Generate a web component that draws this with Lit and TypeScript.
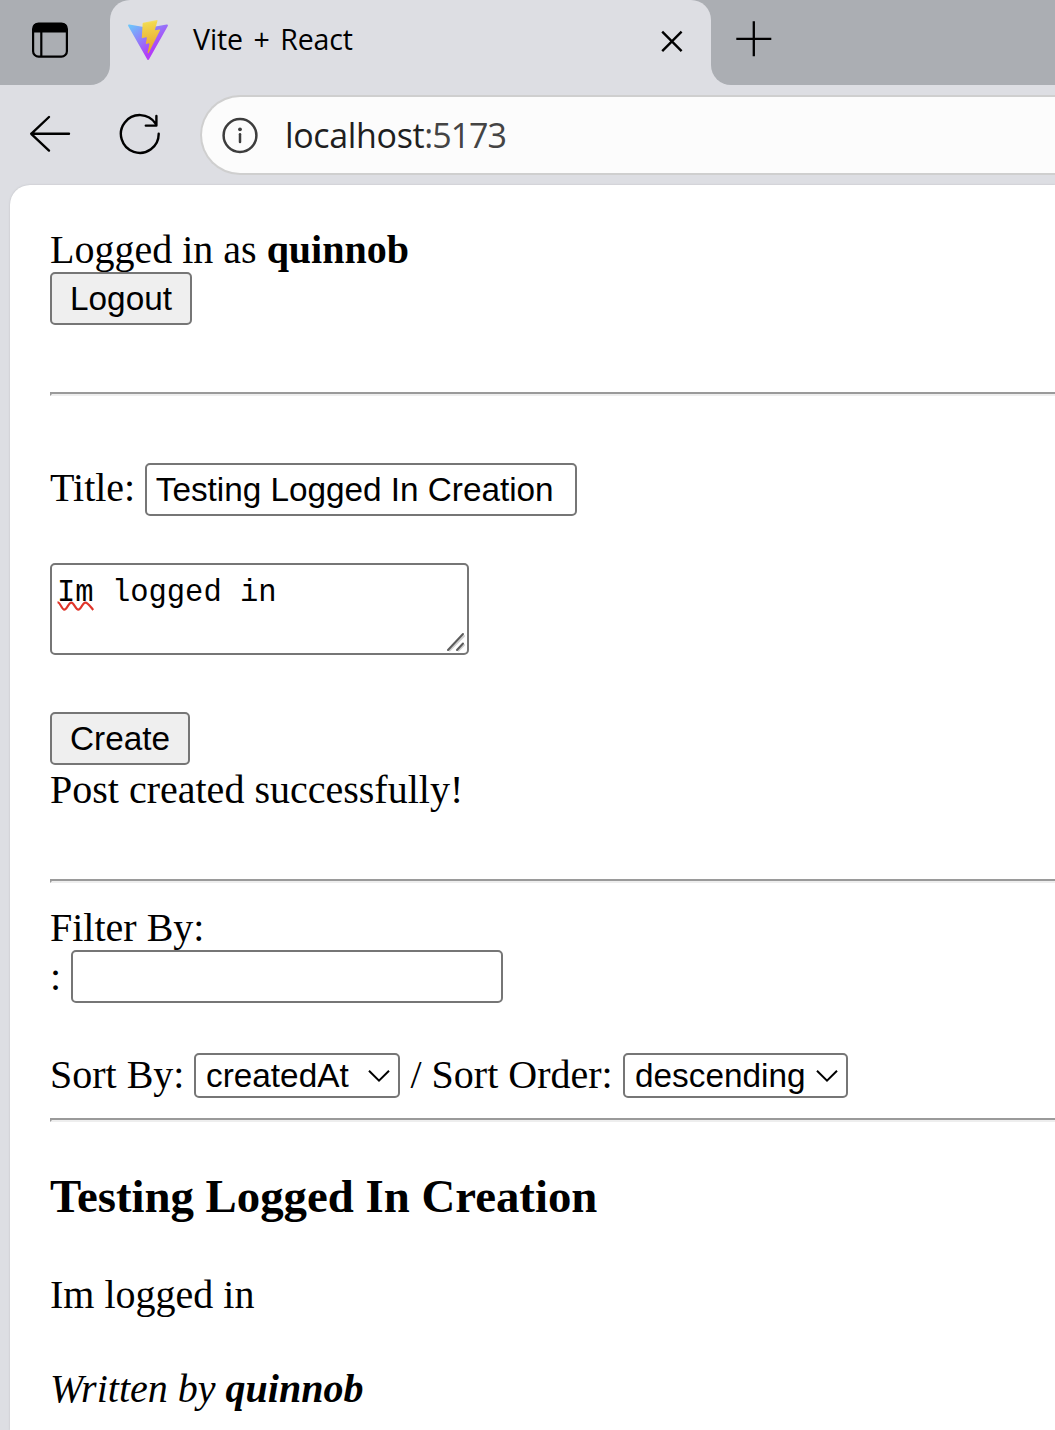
import { LitElement, html, css } from "lit";
import { customElement, property } from "lit/decorators.js";

@customElement("browser-tabs")
class BrowserTabs extends LitElement {
  static styles = css`
    :host { display: flex; height: 85px; background: #abaeb3; }
    .side { width: 110px; height: 85px; box-sizing: border-box; padding: 22px 0 0 32px; border-bottom-right-radius: 20px; background: #abaeb3; }
    .under { background: #dddee3; display: flex; }
    .tab { display: flex; width: 600.5px; height: 85px; box-sizing: border-box; padding: 0 0 0 18px; background: #dddee3; border-radius: 20px 20px 0 0; }
    .wrap { background: #abaeb3; }
    .rest { flex: 1; box-sizing: border-box; padding: 21px 0 0 25.5px; background: #abaeb3; border-bottom-left-radius: 20px; }
    .rest-under { flex: 1; display: flex; background: #dddee3; }
    .logo { margin-top: 20px; flex: none; }
    .name { margin-left: 25px; width: 466.5px; font: 400 28.5px/79px "Open Sans", sans-serif; letter-spacing: -0.1px; word-spacing: 3.2px; color: #000; white-space: nowrap; }
    .close { margin-top: 30px; flex: none; }
    svg { display: block; }
  `;
  render() {
    return html`
      <div class="under"><div class="side">
        <svg width="36" height="36" viewBox="0 0 36 36" fill="none">
          <rect x="1.1" y="1.5" width="33.8" height="33.2" rx="5.5" stroke="#000" stroke-width="2.2" />
          <path d="M1 10.5V6.5Q1 1 6.5 1h23Q35 1 35 6.5v4z" fill="#000" />
          <path d="M9.3 10v24" stroke="#000" stroke-width="2.2" />
        </svg>
      </div></div>
      <div class="wrap"><div class="tab">
        <svg class="logo" width="40" height="40" viewBox="0 0 256 257">
          <defs>
            <linearGradient id="a" x1="-.828%" x2="57.636%" y1="7.652%" y2="78.411%">
              <stop offset="0%" stop-color="#6cc4fb" /><stop offset="100%" stop-color="#b23cf8" />
            </linearGradient>
            <linearGradient id="b" x1="43.376%" x2="50.316%" y1="2.242%" y2="89.03%">
              <stop offset="0%" stop-color="#f5e273" /><stop offset="8.333%" stop-color="#f2d84e" /><stop offset="100%" stop-color="#e8a52e" />
            </linearGradient>
          </defs>
          <path fill="url(#a)" d="M255.153 37.938L134.897 252.976c-2.483 4.44-8.862 4.466-11.382.048L.875 37.958c-2.746-4.814 1.371-10.646 6.827-9.67l120.385 21.517a6.537 6.537 0 0 0 2.322-.004l117.867-21.483c5.438-.991 9.574 4.796 6.877 9.62Z" />
          <path fill="url(#b)" d="M185.432.063L96.44 17.501a3.268 3.268 0 0 0-2.634 3.014l-5.474 92.456a3.268 3.268 0 0 0 3.997 3.378l24.777-5.718c2.318-.535 4.413 1.507 3.936 3.838l-7.361 36.047c-.495 2.426 1.782 4.5 4.151 3.78l15.304-4.649c2.372-.72 4.652 1.36 4.15 3.788l-11.698 56.621c-.732 3.542 3.979 5.473 5.943 2.437l1.313-2.028l72.516-144.72c1.215-2.423-.88-5.186-3.54-4.672l-25.505 4.922c-2.396.462-4.435-1.77-3.759-4.114l16.646-57.705c.677-2.35-1.37-4.583-3.769-4.113Z" />
        </svg>
        <div class="name">Vite + React</div>
        <svg class="close" width="24" height="24" viewBox="0 0 24 24"><path d="M2.2 1.7l19.4 19.4M21.6 1.7L2.2 21.1" stroke="#000" stroke-width="2.4" /></svg>
      </div></div>
      <div class="rest-under"><div class="rest">
        <svg width="36" height="36" viewBox="0 0 36 36"><path d="M.3 17.8h35M17.8 .3v35" stroke="#000" stroke-width="2.3" /></svg>
      </div></div>
    `;
  }
}

@customElement("browser-toolbar")
class BrowserToolbar extends LitElement {
  static styles = css`
    :host { display: flex; height: 100px; background: #dddee3; }
    svg { display: block; flex: none; }
    .back { margin: 30px 0 0 28.5px; }
    .reload { margin: 28px 0 0 48.5px; }
    .address { flex: 1; display: flex; margin: 10px 0 0 39px; height: 80px; box-sizing: border-box; border: 2.5px solid #cfcfcf; border-right: 0; border-radius: 40px 0 0 40px; background: #fcfcfc; }
    .info { margin: 19.5px 0 0 19px; }
    .url { margin-left: 26px; font: 400 34px/76px "Open Sans", sans-serif; letter-spacing: -0.35px; color: #1f1f1f; white-space: nowrap; }
    .port { color: #444; letter-spacing: -1px; }
  `;
  render() {
    return html`
      <svg class="back" width="42" height="38" viewBox="0 0 42 38" fill="none" stroke="#000" stroke-width="2.4" stroke-linecap="round" stroke-linejoin="round">
        <path d="M40 18.8H2.2M20 2L2.2 18.8L20 35.6" />
      </svg>
      <svg class="reload" width="42" height="42" viewBox="0 0 42 42" fill="none" stroke="#000" stroke-width="2.4" stroke-linecap="round" stroke-linejoin="round">
        <path d="M39.7 20.8A18.9 18.9 0 1 1 36.6 10.6M37.4 3V12.6H26.8" />
      </svg>
      <div class="address">
        <svg class="info" width="38" height="38" viewBox="0 0 38 38" fill="none" stroke="#3d3d3d" stroke-width="2.5" stroke-linecap="round">
          <circle cx="19" cy="18.5" r="16.4" /><path d="M19 17.3v7.8" /><circle cx="19" cy="12.3" r="1.9" fill="#3d3d3d" stroke="none" />
        </svg>
        <div class="url">localhost<span class="port">:5173</span></div>
      </div>
    `;
  }
}

@customElement("drop-down")
class DropDown extends LitElement {
  @property() value = "";
  @property({ type: Number }) width = 200;
  static styles = css`
    :host { display: inline-flex; }
    .box { display: flex; align-items: center; justify-content: space-between; height: 45px; box-sizing: border-box; border: 2px solid #767676; border-radius: 5px; background: #fff; padding: 0 8px 0 10px; font: 33.33px/41px "Liberation Sans", sans-serif; color: #000; }
  `;
  render() {
    return html`<div class="box" role="combobox" style="width:${this.width}px"><span>${this.value}</span>
      <svg width="22" height="14" viewBox="0 0 22 14" fill="none"><path d="M1 1.7l10 10 10-10" stroke="#000" stroke-width="2" /></svg></div>`;
  }
}

@customElement("app-root")
class AppRoot extends LitElement {
  static styles = css`
    :host { display: block; width: 1055px; height: 1430px; overflow: hidden; background: #dddee3; }
    .page { margin-left: 10px; height: 1245px; box-sizing: border-box; padding: 42px 0 0 40px; background: #fff; border-top-left-radius: 20px; box-shadow: 0 0 2px #b9babf; font: 40px/46px "Liberation Serif", serif; color: #000; overflow: hidden; white-space: nowrap; }
    .row { display: flex; }
    .btn { display: block; height: 53px; box-sizing: border-box; margin: 0; border: 2px solid #767676; border-radius: 5px; background: #efefef; color: #000; padding: 0; font: 33.33px "Liberation Sans", sans-serif; }
    .logout { width: 142px; margin-top: -1px; }
    .create { width: 140px; margin-top: 57px; }
    .rule { height: 4px; box-sizing: border-box; border: 2px solid; border-color: #9a9a9a #eee #eee #9a9a9a; border-right: 0; }
    .r1 { margin-top: 67px; }
    .r2 { margin-top: 66px; }
    .r3 { margin-top: 20px; }
    .field { width: 432px; height: 53px; box-sizing: border-box; margin: 0; border: 2px solid #767676; border-radius: 5px; background: #fff; color: #000; padding: 0 8.5px; font: 33.33px "Liberation Sans", sans-serif; letter-spacing: -0.02px; outline: none; }
    .title { margin-top: 67px; }
    .title .field { margin-left: 10px; }
    .title span { padding-top: 2px; }
    .area { position: relative; width: 419px; height: 92px; margin-top: 47px; }
    .area textarea { display: block; width: 419px; height: 92px; box-sizing: border-box; margin: 0; resize: none; border: 2px solid #767676; border-radius: 5px; background: #fff; color: #000; padding: 8.5px 5px; font: 30.5px/39px "Liberation Mono", monospace; outline: none; overflow: hidden; }
    .squiggle { position: absolute; left: 7px; top: 37px; }
    .grip { position: absolute; right: 3px; bottom: 3px; }
    .status { margin-top: 2px; }
    .filter { margin-top: 22px; }
    .empty { margin-top: -1px; }
    .empty span { padding-top: 4px; }
    .empty .field { margin-left: 10px; }
    .sort { margin-top: 50px; height: 45px; }
    .sort span { margin-top: -1px; }
    .by { width: 144px; }
    .order { width: 223px; padding-left: 10.5px; box-sizing: border-box; }
    h3 { margin: 47px 0 0; font-size: 46.8px; line-height: 54px; font-weight: 700; }
    .body { margin-top: 49px; }
    .author { margin-top: 48px; font-style: italic; }
  `;
  render() {
    return html`
      <browser-tabs></browser-tabs>
      <browser-toolbar></browser-toolbar>
      <main class="page">
        <div>Logged in as <b>quinnob</b></div>
        <button class="btn logout">Logout</button>
        <div class="rule r1"></div>
        <div class="row title"><span>Title:</span><input class="field" .value=${"Testing Logged In Creation"} /></div>
        <div class="area">
          <textarea spellcheck="false" .value=${"Im logged in"}></textarea>
          <svg class="squiggle" width="38" height="12" viewBox="0 0 38 12" fill="none"><path d="M.5 2.2C3.5 2.2 4.5 9.6 7.3 9.6S11.5 2.6 14.3 2.6S18.5 9.6 21.3 9.6S25.5 2.6 28.3 2.6S33 6 36.2 10" stroke="#e0352a" stroke-width="2.1" /></svg>
          <svg class="grip" width="20" height="20" viewBox="0 0 20 20" fill="none" stroke-linecap="round"><path d="M3.5 18.5L18 4M12.5 18.5L18 13" stroke="#d0d0d0" stroke-width="2" /><path d="M2 18L17 2M11 18L17 11.5" stroke="#5c5c5c" stroke-width="2" /></svg>
        </div>
        <button class="btn create">Create</button>
        <div class="status">Post created successfully!</div>
        <div class="rule r2"></div>
        <div class="filter">Filter By:</div>
        <div class="row empty"><span>:</span><input class="field" /></div>
        <div class="row sort">
          <span class="by">Sort By:</span><drop-down value="createdAt" .width=${206}></drop-down>
          <span class="order">/ Sort Order:</span><drop-down value="descending" .width=${225}></drop-down>
        </div>
        <div class="rule r3"></div>
        <h3>Testing Logged In Creation</h3>
        <div class="body">Im logged in</div>
        <div class="author">Written by <b>quinnob</b></div>
      </main>
    `;
  }
}
